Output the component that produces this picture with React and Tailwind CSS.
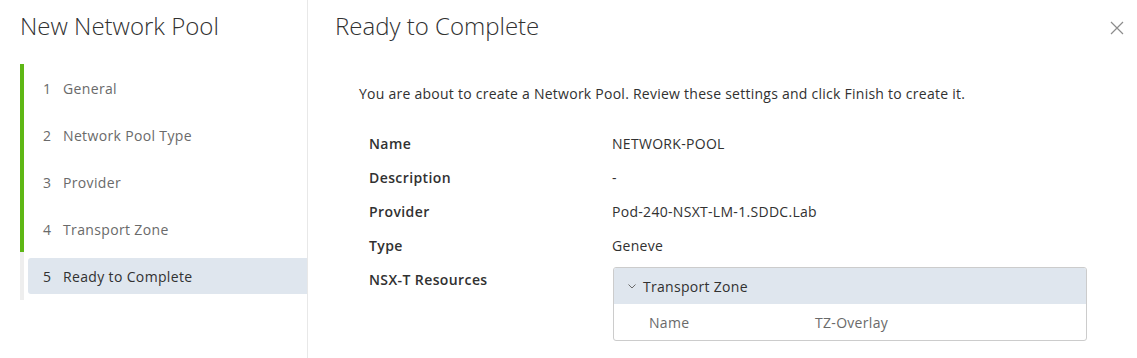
import React from "react";

const steps = ["General", "Network Pool Type", "Provider", "Transport Zone", "Ready to Complete"];

const rows = [
  ["Name", "NETWORK-POOL"],
  ["Description", "-"],
  ["Provider", "Pod-240-NSXT-LM-1.SDDC.Lab"],
  ["Type", "Geneve"],
];

export default function App() {
  return (
    <div className="flex h-[358px] w-[1137px] bg-white text-[#565656]" style={{ fontFamily: '"Open Sans", "Liberation Sans", sans-serif' }}>
      <div className="w-[308px] shrink-0 border-r border-[#e8e8e8] pl-5 pt-[11px]">
        <h1 className="text-[24px] font-light leading-[30px] text-[#313131]">New Network Pool</h1>
        <div className="mt-[23px] flex">
          <div className="flex w-1 flex-col">
            <div className="h-[188px] bg-[#5eb715]" />
            <div className="h-[48px] bg-[#eeeeee]" />
          </div>
          <div className="flex-1 pl-1">
            {steps.map((s, i) => (
              <div
                key={s}
                className={
                  "flex h-[36px] items-center rounded-l-[3px] pl-[15px] text-[14px] tracking-[0.35px] " +
                  (i === 4 ? "bg-[#dfe6ee] text-[#313131]" : "text-[#6a6a6a]")
                }
                style={{ marginTop: i === 0 ? 6 : 11 }}
              >
                <span className="w-[20px]">{i + 1}</span>
                <span>{s}</span>
              </div>
            ))}
          </div>
        </div>
      </div>
      <div className="relative flex-1 pl-[27px] pt-[11px]">
        <h2 className="text-[24px] font-light leading-[30px] text-[#313131]">Ready to Complete</h2>
        <button className="absolute right-[12px] top-[20px] text-[#8c8c8c]">
          <svg width="16" height="16" viewBox="0 0 16 16" fill="none" stroke="currentColor" strokeWidth="1.2">
            <path d="M2 2 L14 14 M14 2 L2 14" />
          </svg>
        </button>
        <p className="mt-[44px] pl-[24px] text-[14px] leading-[18px] tracking-[0.25px] text-[#313131]">
          You are about to create a Network Pool. Review these settings and click Finish to create it.
        </p>
        <div className="mt-[23px] pl-[34px] text-[14px]">
          {rows.map(([k, v]) => (
            <div key={k} className="flex h-[34px] items-center">
              <div className="w-[243px] font-semibold tracking-[0.4px] text-[#313131]">{k}</div>
              <div className="tracking-[0.3px] text-[#313131]">{v}</div>
            </div>
          ))}
          <div className="flex">
            <div className="w-[244px] pt-[7px] font-semibold tracking-[0.4px] text-[#313131]">NSX-T Resources</div>
            <div className="mt-[5px] w-[474px] overflow-hidden rounded-[3px] border border-[#cccccc] tracking-[0.3px]">
              <div className="flex h-[36px] items-center bg-[#dfe6ee] pl-[13px] text-[#313131]">
                <svg width="10" height="10" viewBox="0 0 10 10" fill="none" stroke="#6a6a6a" strokeWidth="1">
                  <path d="M1.5 3.5 L5 7 L8.5 3.5" />
                </svg>
                <span className="ml-[6px]">Transport Zone</span>
              </div>
              <div className="flex h-[36px] items-center pl-[35px] text-[#6a6a6a]">
                <span className="w-[166px]">Name</span>
                <span>TZ-Overlay</span>
              </div>
            </div>
          </div>
        </div>
      </div>
    </div>
  );
}
